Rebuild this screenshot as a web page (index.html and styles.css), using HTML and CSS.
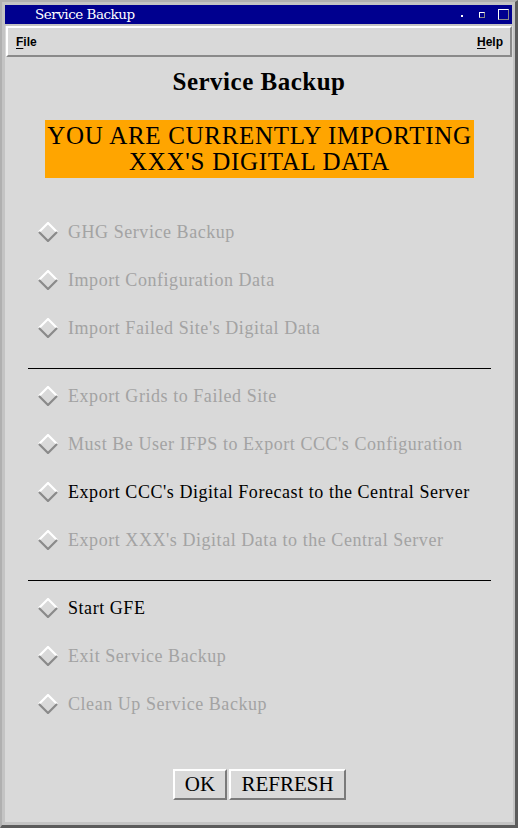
FILE: index.html
```html
<!DOCTYPE html>
<html>
<head>
<meta charset="utf-8">
<link rel="stylesheet" href="styles.css">
</head>
<body>
<div class="window">
  <div class="titlebar">
    <span class="title">Service Backup</span>
    <span class="tb-icons">
      <span class="tb-dot"></span>
      <span class="tb-min"></span>
      <span class="tb-max"></span>
    </span>
  </div>
  <div class="client">
    <div class="menubar">
      <span class="menu"><u>F</u>ile</span>
      <span class="menu"><u>H</u>elp</span>
    </div>
    <div class="content">
      <h1 class="heading">Service Backup</h1>
      <div class="banner"><div class="banner-line">YOU ARE CURRENTLY IMPORTING</div><div class="banner-line">XXX'S DIGITAL DATA</div></div>
      <div class="group">
        <div class="item disabled"><svg class="diamond" viewBox="0 0 20 20"><polyline points="1,10 10,1 19,10" class="hi"/><polyline points="1,10 10,19 19,10" class="lo"/></svg><span>GHG Service Backup</span></div>
        <div class="item disabled"><svg class="diamond" viewBox="0 0 20 20"><polyline points="1,10 10,1 19,10" class="hi"/><polyline points="1,10 10,19 19,10" class="lo"/></svg><span>Import Configuration Data</span></div>
        <div class="item disabled"><svg class="diamond" viewBox="0 0 20 20"><polyline points="1,10 10,1 19,10" class="hi"/><polyline points="1,10 10,19 19,10" class="lo"/></svg><span>Import Failed Site's Digital Data</span></div>
      </div>
      <div class="sep"></div>
      <div class="group">
        <div class="item disabled"><svg class="diamond" viewBox="0 0 20 20"><polyline points="1,10 10,1 19,10" class="hi"/><polyline points="1,10 10,19 19,10" class="lo"/></svg><span>Export Grids to Failed Site</span></div>
        <div class="item disabled"><svg class="diamond" viewBox="0 0 20 20"><polyline points="1,10 10,1 19,10" class="hi"/><polyline points="1,10 10,19 19,10" class="lo"/></svg><span>Must Be User IFPS to Export CCC's Configuration</span></div>
        <div class="item"><svg class="diamond" viewBox="0 0 20 20"><polyline points="1,10 10,1 19,10" class="hi"/><polyline points="1,10 10,19 19,10" class="lo"/></svg><span>Export CCC's Digital Forecast to the Central Server</span></div>
        <div class="item disabled"><svg class="diamond" viewBox="0 0 20 20"><polyline points="1,10 10,1 19,10" class="hi"/><polyline points="1,10 10,19 19,10" class="lo"/></svg><span>Export XXX's Digital Data to the Central Server</span></div>
      </div>
      <div class="sep"></div>
      <div class="group">
        <div class="item"><svg class="diamond" viewBox="0 0 20 20"><polyline points="1,10 10,1 19,10" class="hi"/><polyline points="1,10 10,19 19,10" class="lo"/></svg><span>Start GFE</span></div>
        <div class="item disabled"><svg class="diamond" viewBox="0 0 20 20"><polyline points="1,10 10,1 19,10" class="hi"/><polyline points="1,10 10,19 19,10" class="lo"/></svg><span>Exit Service Backup</span></div>
        <div class="item disabled"><svg class="diamond" viewBox="0 0 20 20"><polyline points="1,10 10,1 19,10" class="hi"/><polyline points="1,10 10,19 19,10" class="lo"/></svg><span>Clean Up Service Backup</span></div>
      </div>
      <div class="buttons">
        <button class="btn btn-ok">OK</button>
        <button class="btn btn-refresh">REFRESH</button>
      </div>
    </div>
  </div>
</div>
</body>
</html>
```
FILE: styles.css
```css
html, body {
  margin: 0;
  padding: 0;
  background: #d9d9d9;
}
.window {
  width: 518px;
  height: 828px;
  box-sizing: border-box;
  border-style: solid;
  border-width: 2px 3px 3px 2px;
  border-color: #b0b0b0 #5c5c5c #5c5c5c #b0b0b0;
  background: #c4c4c4;
  padding: 3px 2px 3px 3px;
  display: flex;
  flex-direction: column;
}
.titlebar {
  height: 19px;
  background: #00008f;
  color: #fff;
  display: flex;
  align-items: center;
  justify-content: space-between;
  padding: 0 3px 0 30px;
  margin-bottom: 2px;
  margin-right: 1px;
}
.title {
  font-family: "DejaVu Serif", "Liberation Serif", serif;
  font-size: 13.5px;
  letter-spacing: -0.5px;
  font-weight: normal;
  line-height: 19px;
}
.tb-icons {
  display: flex;
  align-items: center;
}
.tb-dot {
  width: 2px;
  height: 2px;
  background: #fff;
  margin-right: 16px;
  margin-top: 3px;
}
.tb-min {
  width: 4px;
  height: 4px;
  border-style: solid;
  border-width: 1px;
  border-color: #fff #888 #888 #fff;
  margin-right: 13px;
}
.tb-max {
  width: 9px;
  height: 9px;
  border-style: solid;
  border-width: 1px;
  border-color: #fff #888 #888 #fff;
}
.client {
  flex: 1;
  background: #d9d9d9;
  display: flex;
  flex-direction: column;
}
.menubar {
  height: 27px;
  margin: 0 1px 0 1px;
  border-style: solid;
  border-width: 2px;
  border-color: #fff #8a8a8a #8a8a8a #fff;
  display: flex;
  justify-content: space-between;
  align-items: center;
  padding: 0 7px 0 8px;
  font-family: "Liberation Sans", Arial, sans-serif;
  font-weight: bold;
  font-size: 12px;
  color: #000;
}
.menu u {
  text-decoration-thickness: 1px;
  text-underline-offset: 2px;
}
.content {
  flex: 1;
  display: flex;
  flex-direction: column;
  align-items: stretch;
}
.heading {
  margin: 10px 0 0 0;
  text-align: center;
  font-family: "Liberation Serif", "Times New Roman", serif;
  font-weight: bold;
  font-size: 25px;
  letter-spacing: 0.5px;
  line-height: 30px;
  color: #000;
}
.banner {
  align-self: center;
  margin: 23px 0 0 1px;
  width: 429px;
  background: #ffa500;
  color: #000;
  text-align: center;
  font-family: "Liberation Serif", "Times New Roman", serif;
  font-size: 25px;
  letter-spacing: 0.7px;
  padding: 3px 0 3px 0;
  display: flex;
  flex-direction: column;
}
.banner-line {
  line-height: 26px;
  height: 26px;
}
.group {
  display: flex;
  flex-direction: column;
}
.banner + .group {
  margin-top: 30px;
}
.item {
  height: 48px;
  display: flex;
  align-items: center;
  padding-left: 33px;
  font-family: "Liberation Serif", "Times New Roman", serif;
  font-size: 18px;
  letter-spacing: 0.55px;
  color: #000;
}
.item.disabled {
  color: #a3a3a3;
}
.diamond {
  width: 20px;
  height: 20px;
  margin-right: 10px;
  flex: none;
}
.diamond polyline {
  fill: none;
  stroke-width: 2.2;
}
.diamond .hi {
  stroke: #ffffff;
}
.diamond .lo {
  stroke: #8a8a8a;
}
.sep {
  height: 1px;
  background: #000;
  margin: 16px 22px 3px 23px;
}
.buttons {
  display: flex;
  justify-content: center;
  gap: 2px;
  margin-top: 41px;
  padding-left: 1px;
}
.btn {
  height: 31px;
  box-sizing: border-box;
  background: #d9d9d9;
  border-style: solid;
  border-width: 2px;
  border-color: #fff #7a7a7a #7a7a7a #fff;
  font-family: "Liberation Serif", "Times New Roman", serif;
  font-size: 21px;
  color: #000;
  padding: 0;
  margin: 0;
}
.btn-ok {
  width: 54px;
}
.btn-refresh {
  width: 117px;
}
```
